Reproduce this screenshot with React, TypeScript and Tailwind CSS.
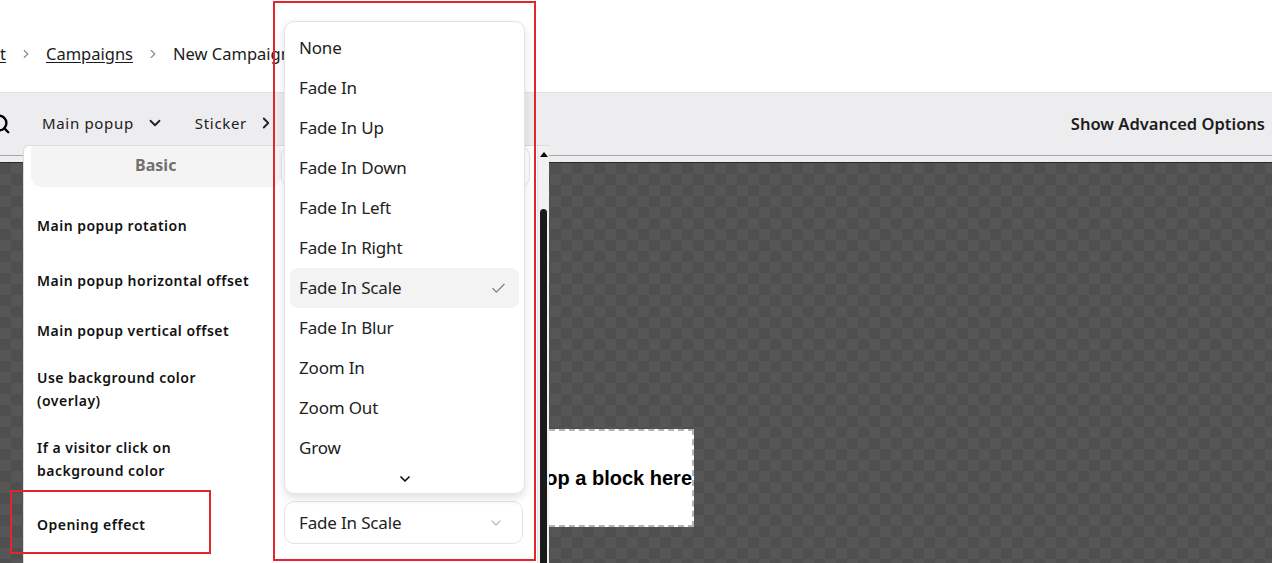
import { Check, ChevronDown, ChevronRight, Search } from "lucide-react";

const effects = [
    "None",
    "Fade In",
    "Fade In Up",
    "Fade In Down",
    "Fade In Left",
    "Fade In Right",
    "Fade In Scale",
    "Fade In Blur",
    "Zoom In",
    "Zoom Out",
    "Grow",
];

const selected = "Fade In Scale";

const Breadcrumb = () => (
    <div className="flex h-[92px] items-center pt-[16px] text-[16.5px] text-[#1b1b1b]">
        <span className="-ml-[100px] w-[106px] text-right underline underline-offset-2">Account</span>
        <ChevronRight size={14} className="mx-[13px] text-[#8a8a8a]" />
        <span className="underline underline-offset-2">Campaigns</span>
        <ChevronRight size={14} className="mx-[13px] text-[#8a8a8a]" />
        <span>New Campaign</span>
    </div>
);

const Toolbar = () => (
    <div>
        <div className="flex h-[64px] items-center border-y border-t-[#e2e2e4] border-b-[#a6a6a6] bg-[#ededef]">
            <Search size={22} strokeWidth={2.6} className="-ml-[11px] text-black" />
            <button className="ml-[31px] flex items-center gap-[12px] pb-[2px] text-[15px] tracking-[0.045em] text-[#202020]">
                Main popup
                <ChevronDown size={18} strokeWidth={2.4} />
            </button>
            <button className="ml-[31px] flex items-center gap-[10px] pb-[2px] text-[15px] tracking-[0.045em] text-[#202020]">
                Sticker
                <ChevronRight size={18} strokeWidth={2.4} />
            </button>
            <button className="ml-auto mr-[7px] text-[16.5px] font-semibold text-[#1c1c1c]">Show Advanced Options</button>
        </div>
        <div className="h-[6px] bg-[#ededef]" />
    </div>
);

// dropdown list that sits above the select
const EffectMenu = () => (
    <div className="absolute bottom-full left-0 mb-[7px] h-[473px] w-[241px] rounded-[10px] border border-[#e4e4e4] bg-white px-[5px] pt-[6px] shadow-[0_4px_10px_rgba(0,0,0,0.12)]">
        {effects.map((effect) => (
            <div
                key={effect}
                className={`flex h-[40px] items-center justify-between rounded-[8px] pl-[9px] pr-[12px] text-[17px] tracking-[-0.01em] text-[#222] ${effect === selected ? "bg-[#f3f3f4]" : ""}`}
            >
                {effect}
                {effect === selected && <Check size={17} strokeWidth={1.6} className="text-[#7a7a7a]" />}
            </div>
        ))}
        <div className="flex h-[22px] items-center justify-center">
            <ChevronDown size={16} strokeWidth={2.6} className="text-[#111]" />
        </div>
    </div>
);

const SettingRow = ({ label, h, children }: { label: string; h: string; children?: React.ReactNode }) => (
    <div className={`flex items-center ${h}`}>
        <div className="w-[247px] shrink-0">
            <p className="w-[216px] text-[14px] font-semibold leading-[23px] tracking-[0.035em] text-[#111]">{label}</p>
        </div>
        {children}
    </div>
);

const SettingsPanel = () => (
    <div className="absolute left-[23px] top-[145px] bottom-0 flex w-[526px] rounded-tl-[6px] border-l border-t border-[#dcdcdc] bg-white">
        <div className="flex-1 px-[7px]">
            <div className="grid grid-cols-2">
                <div className="flex h-[41px] items-center justify-center rounded-b-[10px] rounded-t-[4px] bg-[#f4f4f4] pb-[3px] text-[16px] font-bold text-[#707070]">
                    Basic
                </div>
                <div className="flex h-[41px] items-center justify-center rounded-[10px] border border-[#e6e6e6] text-[16px] font-bold text-[#707070]">
                    Advanced
                </div>
            </div>
            <div className="flex flex-col pl-[6px] pt-[9px]">
                <SettingRow label="Main popup rotation" h="h-[59px]" />
                <SettingRow label="Main popup horizontal offset" h="h-[50px]" />
                <SettingRow label="Main popup vertical offset" h="h-[50px]" />
                <SettingRow label="Use background color (overlay)" h="h-[67px]" />
                <SettingRow label="If a visitor click on background color" h="h-[73px]" />
                <SettingRow label="Opening effect" h="h-[58px]">
                    <div className="relative mb-[3px]">
                        <EffectMenu />
                        <button className="flex h-[43px] w-[239px] items-center justify-between rounded-[10px] border border-[#e4e4e4] bg-white pl-[14px] pr-[18px] text-[17px] tracking-[-0.01em] text-[#222]">
                            {selected}
                            <ChevronDown size={16} strokeWidth={1.6} className="text-[#b8b8b8]" />
                        </button>
                    </div>
                </SettingRow>
            </div>
        </div>
        {/* scrollbar */}
        <div className="flex w-[12px] flex-col items-center border-l border-[#e2e2e2] bg-[#f1f1f1]">
            <div className="mt-[6px] h-0 w-0 border-x-[4px] border-b-[5px] border-x-transparent border-b-black" />
            <div className="mt-[52px] w-[7px] flex-1 rounded-t-[4px] bg-[#1a1a1a]" />
        </div>
    </div>
);

const Canvas = () => (
    <div className="relative h-[401px] border-t border-[#2a2a2a] bg-[#525252] bg-[image:conic-gradient(#565656_25%,#4f4f4f_0_50%,#565656_0_75%,#4f4f4f_0)] bg-[length:22px_22px]">
        <div className="absolute left-[430px] top-[266px] flex h-[98px] w-[264px] items-center justify-end border-2 border-dashed border-[#b4b4b4] bg-white font-['Liberation_Sans',Arial,sans-serif] text-[20px] font-bold text-black">
            Drop a block here
        </div>
    </div>
);

const App = () => {
    return (
        <div className="relative h-[563px] w-[1272px] overflow-hidden bg-white font-['Noto_Sans',sans-serif]">
            <Breadcrumb />
            <Toolbar />
            <Canvas />
            <SettingsPanel />
            {/* red annotation boxes */}
            <div className="pointer-events-none absolute left-[273px] top-[1px] h-[560px] w-[263px] border-2 border-[#e3262b]" />
            <div className="pointer-events-none absolute left-[10px] top-[490px] h-[64px] w-[201px] border-2 border-[#e3262b]" />
        </div>
    );
};

export default App;
